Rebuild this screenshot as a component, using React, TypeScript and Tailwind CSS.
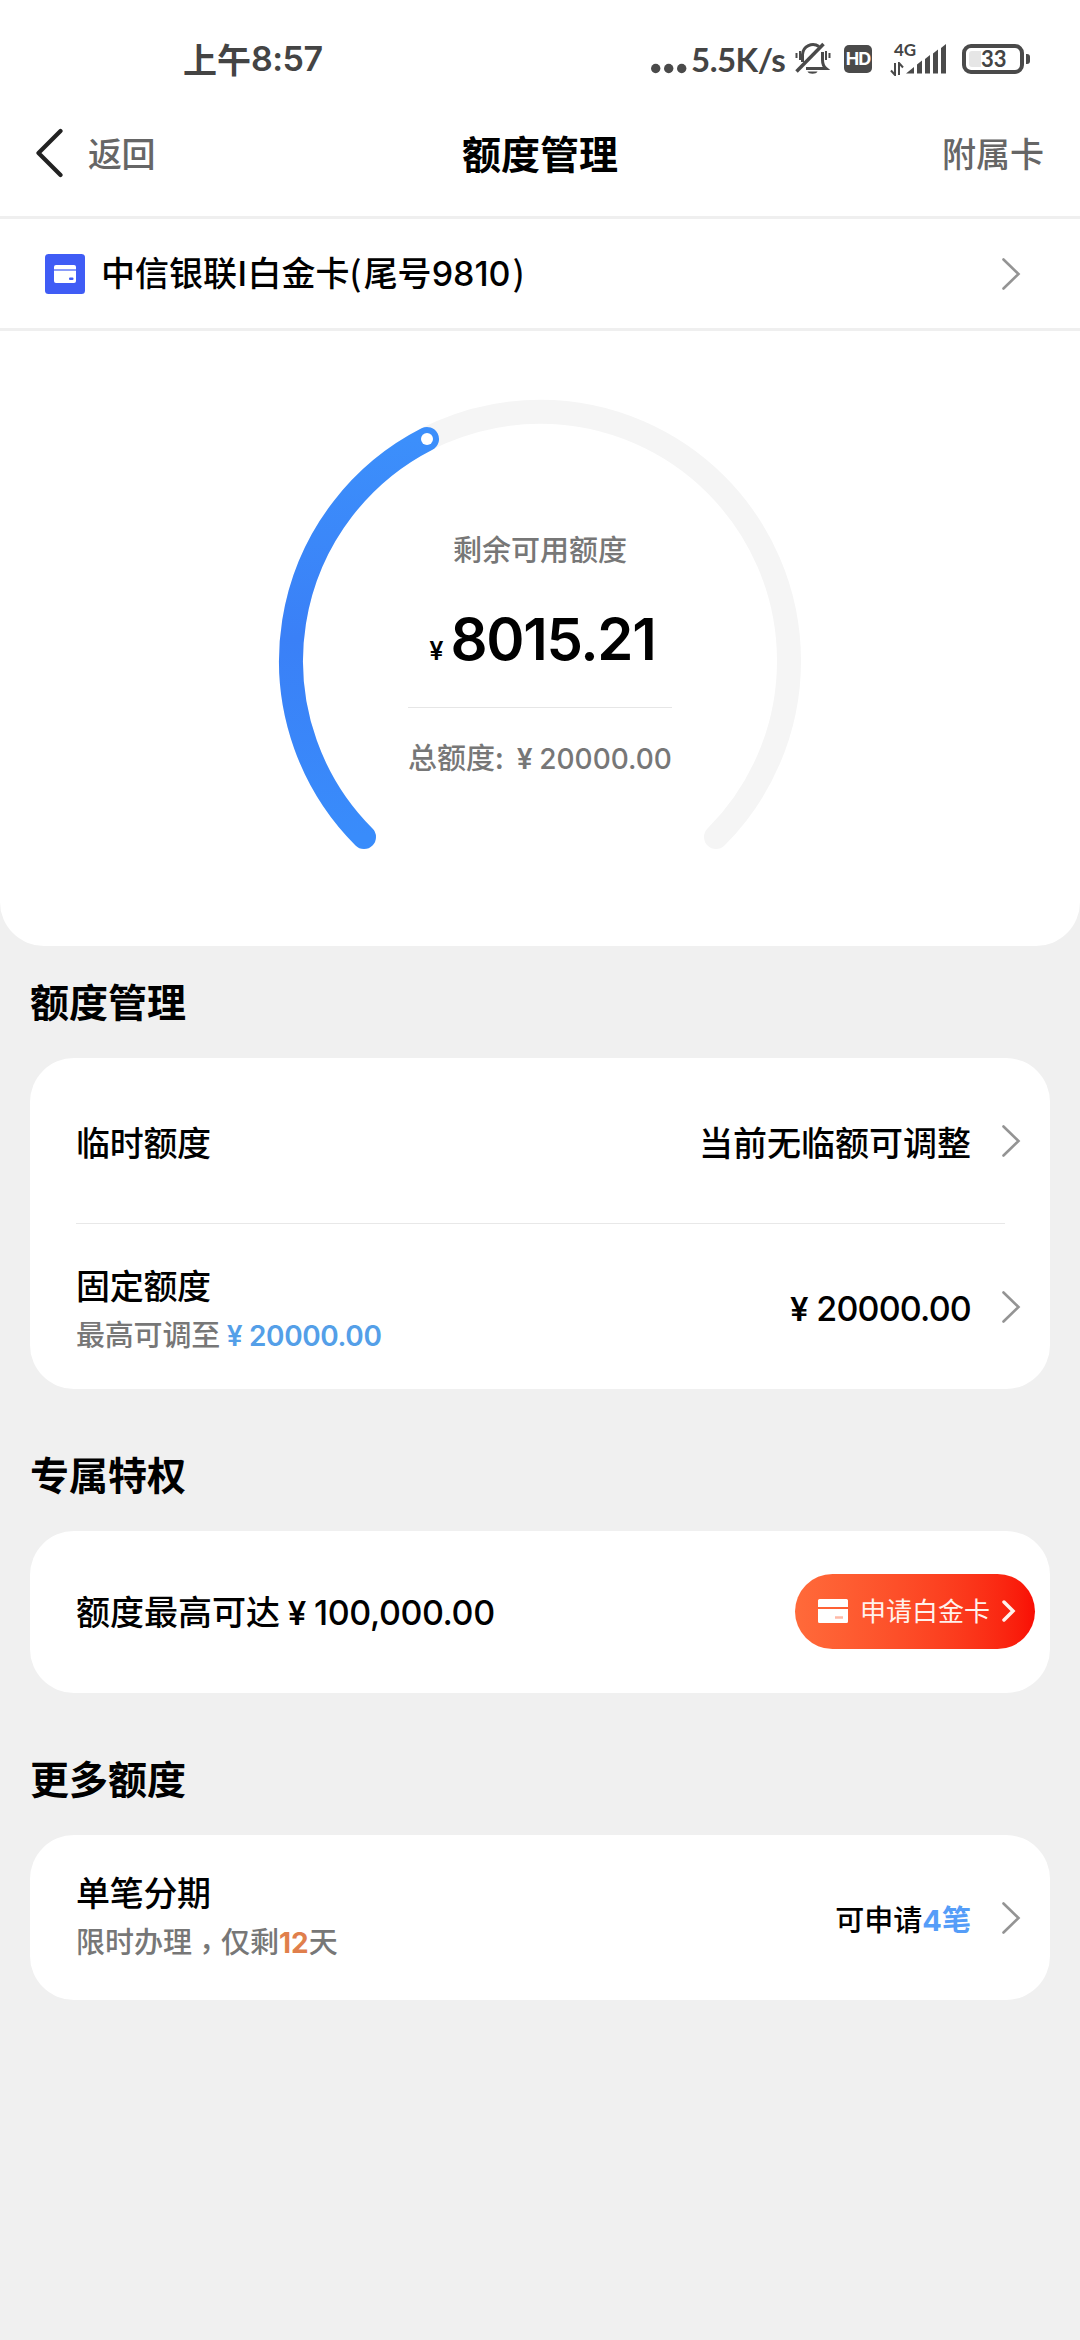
import React from 'react';
import clsx from 'clsx';

const CJK = "font-['Noto_Sans_CJK_SC',sans-serif]";
const NUM = "font-['Inter','Noto_Sans_CJK_SC',sans-serif]";

const Chevron = ({ className }: { className?: string }) => (
  <svg className={clsx('h-[34px] w-[20px] shrink-0', className)} viewBox="0 0 20 34" fill="none">
    <path d="M2.5 2.5 17.500 17 2.5 31.5" stroke="#949494" strokeWidth="2.6" strokeLinecap="round" />
  </svg>
);

// Yuan sign takes a full CJK cell
const Yuan = () => (
  <span className="inline-block w-[1em] text-center font-['Roboto',sans-serif]">¥</span>
);

const StatusBar = () => (
  <div className="flex h-[90px] items-center pt-[28px] pl-[183px] text-[#444]">
    <div className="flex items-center text-[34px] leading-none font-bold">
      <span>上午</span>
      <span className={clsx(NUM, 'font-semibold tracking-[-0.5px]')}>8:57</span>
    </div>
    <div className="ml-auto flex items-center pr-[50px]">
      <svg className="h-[40px] w-[36px]" viewBox="0 0 36 40" fill="#4a4a4a">
        <circle cx="4.7" cy="29.5" r="4.7" />
        <circle cx="17.7" cy="29.5" r="4.7" />
        <circle cx="30.7" cy="29.5" r="4.7" />
      </svg>
      <span className="ml-[4px] w-[98px] font-['Lato',sans-serif] text-[33px] leading-none font-bold tracking-[-0.5px]">5.5K/s</span>
      <svg className="ml-[6px] h-[34px] w-[36px]" viewBox="0 0 36 34" fill="none" stroke="#4a4a4a">
        <path d="M7.500 20v-7.500a10.500 10.500 0 0 1 16.500-8" strokeWidth="3" />
        <path d="M27.500 10v8c0 5 1 6.500 3.500 8.500H11" strokeWidth="3" />
        <path d="M1.500 29.500 28.500 2" strokeWidth="3.500" />
        <path d="M1.500 11v5M5 9v9M34.500 11v5M31 9v9" strokeWidth="2" />
        <path d="M12.500 29.500h10c-1 3-9 3-10 0z" fill="#4a4a4a" stroke="none" />
      </svg>
      <div className="ml-[13px] flex h-[28px] w-[28px] items-center justify-center rounded-[5px] bg-[#4a4a4a] font-['Inter',sans-serif] text-[18px] leading-none font-bold tracking-[-1px] text-white">
        HD
      </div>
      <div className="ml-[18px] flex h-[34px] w-[56px]">
        <div className="flex w-[16px] flex-col justify-between">
          <span className="ml-[4px] font-['Lato',sans-serif] text-[17px] leading-[16px] font-bold">4G</span>
          <svg className="h-[14px] w-[14px]" viewBox="0 0 14 14" fill="none" stroke="#4a4a4a" strokeWidth="2">
            <path d="M5 1v12L1 8.500M9 13V1l4 4.500" />
          </svg>
        </div>
        <svg className="h-[34px] w-[40px]" viewBox="0 0 40 34" fill="#4a4a4a">
          <path d="M0 31.500 8 25v6.500zM11 22.500l5-4v13h-5zM19 17l5-4v18.500h-5zM27 11.500l5-4v24h-5zM35 6l5-4v29.500h-5z" />
        </svg>
      </div>
      <div className="ml-[16px] flex items-center">
        <div className="flex h-[30px] w-[62px] items-center rounded-[9px] border-4 border-[#4a4a4a] pl-[3px]">
          <div className="h-[16px] w-[12px] rounded-l-[3px] bg-[#e6e6e6]" />
          <span className="font-['Lato',sans-serif] text-[22px] leading-none font-bold">33</span>
        </div>
        <div className="ml-[2px] h-[10px] w-[4px] rounded-r-[3px] bg-[#4a4a4a]" />
      </div>
    </div>
  </div>
);

const NavBar = () => (
  <div className="grid h-[126px] grid-cols-3 items-center px-[36px] text-[34px] leading-none font-medium text-[#666]">
    <div className="flex items-center">
      <svg className="h-[50px] w-[28px]" viewBox="0 0 28 50" fill="none">
        <path d="M24.500 3 2.500 25l22 22" stroke="#222" strokeWidth="4.200" strokeLinecap="round" strokeLinejoin="round" />
      </svg>
      <span className="ml-[24px] tracking-[-0.5px]">返回</span>
    </div>
    <h1 className="pb-[2px] text-center text-[39px] font-bold text-black">额度管理</h1>
    <span className="text-right">附属卡</span>
  </div>
);

const CardRow = () => (
  <div className="flex h-[115px] items-center border-y-[3px] border-[#efefef] pr-[59px] pl-[45px]">
    <svg className="h-[40px] w-[40px]" viewBox="0 0 40 40">
      <rect width="40" height="40" rx="3.500" fill="#3f5cf5" />
      <rect x="9" y="11" width="22" height="18" rx="2" fill="#fff" />
      <path d="M9 16h22" stroke="#3f5cf5" strokeWidth="1.200" />
      <rect x="24" y="23.500" width="4.500" height="2.500" rx="1" fill="#3f5cf5" />
    </svg>
    <span className="ml-[16px] pb-[2px] text-[34px] leading-none font-medium">
      中信银联I白金卡<span className="mr-[2px]">(</span>尾号<span className={NUM}>9810</span><span className="ml-[2px]">)</span>
    </span>
    <Chevron className="ml-auto" />
  </div>
);

const Gauge = () => (
  <div className="relative mx-auto mt-[65px] h-[480px] w-[530px]">
    <svg className="absolute inset-0 h-full w-full" viewBox="275 396 530 480" fill="none">
      <defs>
        <linearGradient id="gauge" x1="0" y1="0" x2="0" y2="1">
          <stop offset="0" stopColor="#3c8ffb" />
          <stop offset="0.5" stopColor="#3a80f7" />
          <stop offset="1" stopColor="#398cfb" />
        </linearGradient>
      </defs>
      <path d="M364 837A249 249 0 1 1 716 837" stroke="#f5f5f5" strokeWidth="24" strokeLinecap="round" />
      <path d="M364 837A249 249 0 0 1 427 439" stroke="url(#gauge)" strokeWidth="24" strokeLinecap="round" />
      <circle cx="427" cy="439" r="6" fill="#fff" />
    </svg>
    <div className="relative flex flex-col items-center pt-[134px]">
      <span className="text-[29px] leading-[36px] font-medium text-[#777]">剩余可用额度</span>
      <div className="mt-[38px] ml-[5px] flex items-baseline">
        <span className="mr-[7px] font-['Roboto',sans-serif] text-[26px] font-medium">¥</span>
        <span className={clsx(NUM, 'text-[58px] leading-[70px] font-semibold tracking-[-1.3px]')}>8015.21</span>
      </div>
      <div className="mt-[33px] h-px w-[264px] bg-[#e6e6e6]" />
      <div className="mt-[30px] text-[29px] leading-[36px] font-medium whitespace-nowrap text-[#777]">
        总额度: <Yuan />
        <span className={clsx(NUM, 'text-[28px]')}>20000.00</span>
      </div>
    </div>
  </div>
);

const Section: React.FC<{ title: string; className: string; children: React.ReactNode }> = ({ title, className, children }) => (
  <section className={clsx('px-[30px]', className)}>
    <h2 className="h-[54px] text-[39px] leading-[54px] font-bold">{title}</h2>
    <div className="mt-[31px] rounded-[44px] bg-white pr-[29px] pl-[46px]">{children}</div>
  </section>
);

export default function App() {
  return (
    <div className={clsx('min-h-[2340px] w-[1080px] bg-[#f0f0f0] text-black', CJK)}>
      <div className="h-[946px] rounded-b-[44px] bg-white">
        <StatusBar />
        <NavBar />
        <CardRow />
        <Gauge />
      </div>

      <Section title="额度管理" className="mt-[27px]">
        <div className="flex h-[165px] items-center text-[34px] leading-none font-medium">
          <span className="pt-[2px] tracking-[-0.3px]">临时额度</span>
          <span className="ml-auto pt-[2px]">当前无临额可调整</span>
          <Chevron className="ml-[30px]" />
        </div>
        <div className="mr-[16px] h-px bg-[#e8e8e8]" />
        <div className="flex h-[165px] items-center text-[34px] leading-none font-medium">
          <div className="pt-[7px]">
            <div className="leading-[48px] tracking-[-0.3px]">固定额度</div>
            <div className="text-[29px] leading-[48px] tracking-[-0.2px] text-[#777]">
              最高可调至
              <span className="text-[#549fe8]">
                <Yuan />
                <span className={clsx(NUM, 'text-[28px] font-semibold tracking-[-0.4px]')}>20000.00</span>
              </span>
            </div>
          </div>
          <span className="ml-auto pt-[2px]">
            <Yuan />
            <span className={clsx(NUM, 'tracking-[-0.8px]')}>20000.00</span>
          </span>
          <Chevron className="ml-[30px]" />
        </div>
      </Section>

      <Section title="专属特权" className="mt-[57px]">
        <div className="-mr-[14px] flex h-[162px] items-center text-[34px] leading-none font-medium">
          <span>
            额度最高可达
            <Yuan />
            <span className={clsx(NUM, 'tracking-[-0.4px]')}>100,000.00</span>
          </span>
          <button className="mb-[2px] ml-auto flex h-[75px] w-[240px] items-center rounded-full bg-linear-to-r from-[#ff6a3a] to-[#f90d05] pl-[23px] text-[26px] leading-none font-normal text-[#fff1ec]">
            <svg className="h-[24px] w-[30px]" viewBox="0 0 30 24" fill="#fff">
              <path d="M1.500 0h27A1.500 1.500 0 0 1 30 1.500V8H0V1.500A1.500 1.500 0 0 1 1.500 0zM0 10h30v12.500a1.500 1.500 0 0 1-1.500 1.500h-27A1.500 1.500 0 0 1 0 22.500z" />
              <path d="M17 18.500h8" stroke="#ffb9a6" strokeWidth="2.500" />
            </svg>
            <span className="ml-[12px] pb-[2px]">申请白金卡</span>
            <svg className="ml-[12px] h-[24px] w-[14px]" viewBox="0 0 14 24" fill="none">
              <path d="m2 3 9 9-9 9" stroke="#fff1ec" strokeWidth="3.500" strokeLinecap="round" />
            </svg>
          </button>
        </div>
      </Section>

      <Section title="更多额度" className="mt-[57px]">
        <div className="flex h-[165px] items-center text-[34px] leading-none font-medium">
          <div>
            <div className="leading-[48px] tracking-[-0.3px]">单笔分期</div>
            <div className="text-[29px] leading-[48px] text-[#777]">
              限时办理<span className="relative top-[7px] font-['Noto_Sans_CJK_TC',sans-serif]">，</span>仅剩
              <span className={clsx(NUM, 'text-[28px] font-bold text-[#e07f4c]')}>12</span>天
            </div>
          </div>
          <span className="ml-auto pt-[3px] text-[29px]">
            可申请<span className="font-bold text-[#559df8]"><span className={NUM}>4</span>笔</span>
          </span>
          <Chevron className="ml-[30px]" />
        </div>
      </Section>
    </div>
  );
}
